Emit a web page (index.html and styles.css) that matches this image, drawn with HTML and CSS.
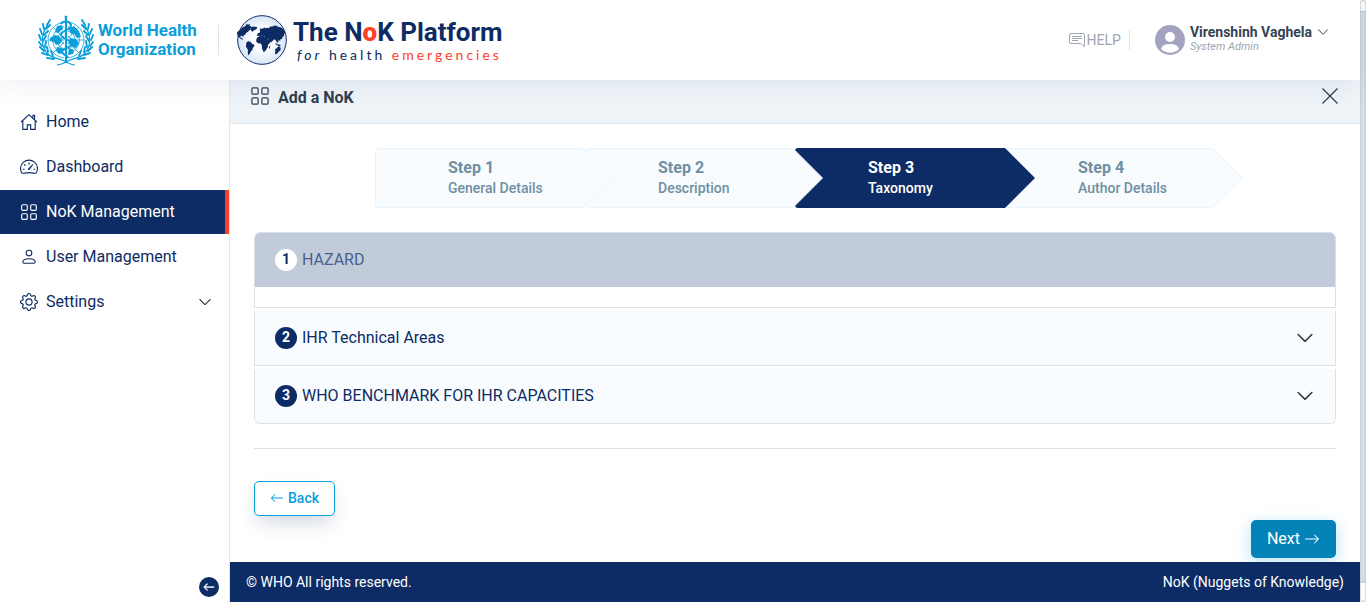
FILE: index.html
```html
<!DOCTYPE html>
<html lang="en">
<head>
<meta charset="utf-8">
<meta name="viewport" content="width=device-width, initial-scale=1">
<title>The NoK Platform - Add a NoK</title>
<link rel="stylesheet" href="styles.css">
</head>
<body>
<svg class="sprite" aria-hidden="true">
  <symbol id="chevron" viewBox="0 0 16 16"><path d="M1.646 4.646a.5.5 0 0 1 .708 0L8 10.293l5.646-5.647a.5.5 0 0 1 .708.708l-6 6a.5.5 0 0 1-.708 0l-6-6a.5.5 0 0 1 0-.708z"/></symbol>
  <symbol id="arrow-left" viewBox="0 0 16 16"><path d="M15 8a.5.5 0 0 0-.5-.5H2.707l3.147-3.146a.5.5 0 1 0-.708-.708l-4 4a.5.5 0 0 0 0 .708l4 4a.5.5 0 0 0 .708-.708L2.707 8.5H14.5A.5.5 0 0 0 15 8z"/></symbol>
  <symbol id="grid" viewBox="0 0 16 16"><g fill="none" stroke="currentColor"><rect x="1.5" y="1.5" width="5" height="5" rx="1"/><rect x="9.5" y="1.5" width="5" height="5" rx="1"/><rect x="1.5" y="9.5" width="5" height="5" rx="1"/><rect x="9.5" y="9.5" width="5" height="5" rx="1"/></g></symbol>
</svg>
<div class="frame">
  <div class="app">
    <header class="topbar">
      <div class="brand">
        <a class="who" href="#">
          <svg class="who-emblem" viewBox="0 0 56 52" fill="none" stroke="currentColor" aria-hidden="true">
            <g stroke-width=".8"><circle cx="28" cy="26" r="18"/><circle cx="28" cy="26" r="13.500"/><circle cx="28" cy="26" r="9"/><circle cx="28" cy="26" r="4.500"/><path d="M10 26h36M15.300 13.300l25.400 25.400M40.700 13.300L15.300 38.700"/></g>
            <path fill="currentColor" stroke="none" d="M12 24l5-3 4 1 3 4-2 4-4 1-2-3-4-1zM19 12l5-1 1 4-5 4-3-1zM31 15l5-3 5 5 2 6-4 1-3-4-4-1zM32 24l6 1 3 4-3 5-4-1-3-4zM31 34l5 2-1 4-5 1zM19 33l5 1 1 5-4 1-3-3z"/>
            <path stroke="#fff" stroke-width="4" d="M28 6v40"/>
            <path stroke-width="2.200" d="M28 2v47"/><circle cx="28" cy="3" r="1" fill="currentColor"/>
            <path stroke-width="2" d="M23 10c2-4 9-3 10 1 1 5-10 5-10 10 0 4 10 4 10 9 0 4-9 4-9 8 0 3 6 3 6 6"/>
            <g stroke-width="1.200"><path d="M10 11C3 19 2 32 10 40c5 5 12 4 18 8 4 2 6 3 9 3M46 11c7 8 8 21 0 29-5 5-12 4-18 8-4 2-6 3-9 3"/></g>
            <g stroke-width="1.900" stroke-linecap="round"><path d="M9 11l3-5M6 15l-1-5M4 20l-2-5M3 26l-2-5M4 32l-3-4M6 37l-4-4M10 41l-6-2M16 45l-7-1M8 15l4-4M6 21l4-4M5 27l3-5M7 33l1-6M10 38l-1-5M15 42l-2-5M47 11l-3-5M50 15l1-5M52 20l2-5M53 26l2-5M52 32l3-4M50 37l4-4M46 41l6-2M40 45l7-1M48 15l-4-4M50 21l-4-4M51 27l-3-5M49 33l-1-6M46 38l1-5M41 42l2-5"/></g>
          </svg>
          <span class="who-name">World Health<br>Organization</span>
        </a>
        <a class="nok" href="#">
          <svg class="globe" viewBox="80 29 152 152" aria-hidden="true">
            <defs><radialGradient id="sea"><stop offset=".4" stop-color="#fff"/><stop offset="1" stop-color="#d7e6f7"/></radialGradient></defs>
            <circle cx="156" cy="105" r="74" fill="url(#sea)" stroke="#0d2b64" stroke-width="3"/>
            <path fill="#0d2b64" d="M88 76l8-9 9-4 4-6 7 1 4-2-2 6 6 3-4 5 2 4-5 1-3 5-6 3-3 6-5 1 1 4-3 1-3-3-5 1 1 5 5 2 2 4-5-1-9-8-4-10 1-5zM121 66l9-2 12 2-3 6-7 3-5 5-5-5 1-4-4-2zM109 111l6-2 8 3 3 5 6 2 1 4-5 6-1 6-5 5-3 6-4 5-2-2 0-14-6-10zM142 97l6-3 9-1 7 3 6-1 4 8 4 4 4 1-2 6-6 6 0 6-5 8-4 6-5 1-4-10-1-11-4-5-7 1-6-7 1-7zM178 124l3-3-1 9-3 2zM144 84l5-1 2-6-3-2 3-5 6 1 7-4 3 2 5-1 4 1 5-5 8 0 3-3 8 1 5 3 9 2 9 7 4 9-4 4 0 6-4 2-2 6-5 2-1 6-4-5-2 9-4-1-4-7-4-2-5 5-4 4-4 0-4-7-3-6-7-1-1-4-6 0-3-3-6 4-4-3-6 1zM195 133l6-3 4-5 5 0 3 4-1 7-5 5-7 7-5-1 2-9zM197 113l7 6 7 0 2 4-7 0-8-4z"/>
          </svg>
          <span class="nok-text">
            <strong class="nok-name">The N<b>o</b>K Platform</strong>
            <span class="nok-tag"><i>for</i> health <b>emergencies</b></span>
          </span>
        </a>
      </div>
      <div class="account">
        <a class="help" href="#">
          <svg class="help-icon" viewBox="0 0 16 16" fill="none" stroke="currentColor" aria-hidden="true"><path d="M15.500 14.500V3A1.500 1.500 0 0 0 14 1.500H2A1.500 1.500 0 0 0 .5 3v7A1.500 1.500 0 0 0 2 11.500h9.500zM3 4.500h10M3 6.500h10M3 8.500h6"/></svg>HELP</a>
        <button class="user" type="button">
          <svg class="avatar" viewBox="0 0 30 30" aria-hidden="true"><circle cx="15" cy="15" r="15" fill="#a4a3bf"/><circle cx="15" cy="12" r="5" fill="#fff"/><path fill="#fff" d="M6 24c1-4 5-5 9-5s8 1 9 5c-5 5-13 5-18 0z"/></svg>
          <span class="user-text"><span class="user-name">Virenshinh Vaghela<svg class="icon-sm" aria-hidden="true"><use href="#chevron"/></svg></span><em class="user-role">System Admin</em></span>
        </button>
      </div>
    </header>
    <div class="body">
      <aside class="sidebar">
        <nav class="menu">
          <a class="menu-item" href="#"><svg class="menu-icon" viewBox="0 0 16 16" fill="none" stroke="currentColor" aria-hidden="true"><path d="M1 8l7-6.500L15 8M2.500 7v7.500h4v-4h3v4h4V7M11.500 4V2h1.500v3.500"/></svg>Home</a>
          <a class="menu-item" href="#"><svg class="menu-icon" viewBox="0 0 16 16" fill="none" stroke="currentColor" aria-hidden="true"><path d="M1.600 13.300a7.500 7.500 0 1 1 12.800 0c-.7 1-3-.3-6.400-.3s-5.700 1.300-6.400.3zM8 4v2M3.700 5.700l1.200 1.200M2.500 10h1.600M12 10h1.500"/><path d="M7.300 9.300L11.500 5l.5.500-3.300 4.800c-.8.900-2.200 0-1.400-1z" fill="currentColor" stroke="none"/></svg>Dashboard</a>
          <a class="menu-item active" href="#" aria-current="page"><svg class="menu-icon" aria-hidden="true"><use href="#grid"/></svg>NoK Management</a>
          <a class="menu-item" href="#"><svg class="menu-icon" viewBox="0 0 16 16" fill="none" stroke="currentColor" aria-hidden="true"><circle cx="8" cy="4.500" r="2.500"/><path d="M2.500 12.500c0-2 2-3 5.500-3s5.500 1 5.500 3c0 1-1 1-1 1h-9s-1 0-1-1z"/></svg>User Management</a>
          <a class="menu-item" href="#"><svg class="menu-icon" viewBox="0 0 16 16" fill="currentColor" aria-hidden="true"><path d="M8 4.754a3.246 3.246 0 1 0 0 6.492 3.246 3.246 0 0 0 0-6.492zM5.754 8a2.246 2.246 0 1 1 4.492 0 2.246 2.246 0 0 1-4.492 0z"/><path d="M9.796 1.343c-.527-1.790-3.065-1.790-3.592 0l-.094.319a.873.873 0 0 1-1.255.520l-.292-.160c-1.640-.892-3.433.902-2.540 2.541l.159.292a.873.873 0 0 1-.520 1.255l-.319.094c-1.790.527-1.790 3.065 0 3.592l.319.094a.873.873 0 0 1 .520 1.255l-.160.292c-.892 1.640.901 3.434 2.541 2.540l.292-.159a.873.873 0 0 1 1.255.520l.094.319c.527 1.790 3.065 1.790 3.592 0l.094-.319a.873.873 0 0 1 1.255-.520l.292.160c1.640.893 3.434-.902 2.540-2.541l-.159-.292a.873.873 0 0 1 .520-1.255l.319-.094c1.790-.527 1.790-3.065 0-3.592l-.319-.094a.873.873 0 0 1-.520-1.255l.160-.292c.893-1.640-.902-3.433-2.541-2.540l-.292.159a.873.873 0 0 1-1.255-.520l-.094-.319zm-2.633.283c.246-.835 1.428-.835 1.674 0l.094.319a1.873 1.873 0 0 0 2.693 1.115l.291-.160c.764-.415 1.600.420 1.184 1.185l-.159.292a1.873 1.873 0 0 0 1.116 2.692l.318.094c.835.246.835 1.428 0 1.674l-.319.094a1.873 1.873 0 0 0-1.115 2.693l.160.291c.415.764-.420 1.600-1.185 1.184l-.291-.159a1.873 1.873 0 0 0-2.693 1.116l-.094.318c-.246.835-1.428.835-1.674 0l-.094-.319a1.873 1.873 0 0 0-2.692-1.115l-.292.160c-.764.415-1.600-.420-1.184-1.185l.159-.291A1.873 1.873 0 0 0 1.945 8.930l-.319-.094c-.835-.246-.835-1.428 0-1.674l.319-.094A1.873 1.873 0 0 0 3.060 4.377l-.160-.292c-.415-.764.420-1.600 1.185-1.184l.292.159a1.873 1.873 0 0 0 2.692-1.115l.094-.319z"/></svg>Settings<svg class="icon-md push" aria-hidden="true"><use href="#chevron"/></svg></a>
        </nav>
        <button class="collapse" type="button" aria-label="Collapse menu"><svg aria-hidden="true"><use href="#arrow-left"/></svg></button>
      </aside>
      <div class="main">
        <div class="title-bar">
          <svg class="title-icon" aria-hidden="true"><use href="#grid"/></svg>
          <h1>Add a NoK</h1>
          <button class="close" type="button" aria-label="Close"><svg viewBox="0 0 16 16" fill="none" stroke="currentColor" aria-hidden="true"><path d="M.5.5l15 15M15.500.5l-15 15"/></svg></button>
        </div>
        <main class="content">
          <ol class="steps">
            <li class="step"><svg class="step-shape" aria-hidden="true"><path d="M3 .5H208L237.500 30 208 59.500H3Q.5 59.500.5 57V3Q.5.500 3 .5z"/></svg><strong>Step 1</strong><span>General Details</span></li>
            <li class="step"><svg class="step-shape" aria-hidden="true"><path d="M3 .5H208L237.500 30 208 59.500H3Q.5 59.500.5 57V3Q.5.500 3 .5z"/></svg><strong>Step 2</strong><span>Description</span></li>
            <li class="step active" aria-current="step"><svg class="step-shape" aria-hidden="true"><path d="M3 0H210L240 30 210 60H3Q0 60 0 57V3Q0 0 3 0z"/></svg><strong>Step 3</strong><span>Taxonomy</span></li>
            <li class="step"><svg class="step-shape" aria-hidden="true"><path d="M3 .5H208L237.500 30 208 59.500H3Q.5 59.500.5 57V3Q.5.500 3 .5z"/></svg><strong>Step 4</strong><span>Author Details</span></li>
          </ol>
          <div class="accordion">
            <section class="panel open"><button class="panel-head" type="button" aria-expanded="true"><span class="num">1</span>HAZARD</button><div class="panel-body"></div></section>
            <section class="panel"><button class="panel-head" type="button" aria-expanded="false"><span class="num">2</span>IHR Technical Areas<svg class="icon-lg push" aria-hidden="true"><use href="#chevron"/></svg></button></section>
            <section class="panel"><button class="panel-head" type="button" aria-expanded="false"><span class="num">3</span>WHO BENCHMARK FOR IHR CAPACITIES<svg class="icon-lg push" aria-hidden="true"><use href="#chevron"/></svg></button></section>
          </div>
          <div class="actions">
            <button class="back" type="button"><svg aria-hidden="true"><use href="#arrow-left"/></svg>Back</button>
            <button class="next" type="button">Next<svg aria-hidden="true"><use href="#arrow-left"/></svg></button>
          </div>
        </main>
        <footer class="footer"><span>© WHO All rights reserved.</span><span>NoK (Nuggets of Knowledge)</span></footer>
      </div>
    </div>
  </div>
  <div class="scroll-track"><div class="scroll-thumb"></div></div>
</div>
</body>
</html>
```

FILE: styles.css
```css
* { box-sizing: border-box; }

body {
  margin: 0;
  font: 16px/24px Roboto, "Liberation Sans", sans-serif;
  color: #0d2b64;
  background: #fff;
}

a { color: inherit; text-decoration: none; }

button {
  font: inherit;
  color: inherit;
  background: none;
  border: 0;
  padding: 0;
  cursor: pointer;
}

svg { flex: none; fill: currentColor; }
svg[fill="none"] { fill: none; }
.sprite { position: absolute; width: 0; height: 0; }

.icon-sm { width: 12px; height: 12px; }
.icon-md { width: 14px; height: 14px; color: #111; }
.icon-lg { width: 18px; height: 18px; color: #212529; stroke: currentColor; stroke-width: .4; }
.push { margin-left: auto; }

.frame { display: flex; min-height: 100vh; }
.app { flex: 1; display: flex; flex-direction: column; min-width: 0; }

/* Scroll bar */
.scroll-track {
  width: 6px;
  padding: 11px 0 19px;
  display: flex;
  background: #fff;
  border-radius: 3px;
  box-shadow: inset 0 0 2px #888;
}
.scroll-thumb { flex: 1; background: #d3dee6; box-shadow: inset 0 0 2px #9fb3c1; }

/* Header */
.topbar {
  position: relative;
  z-index: 2;
  display: flex;
  align-items: center;
  justify-content: space-between;
  height: 80px;
  padding: 0 31px 0 38px;
  background: #fff;
  box-shadow: 0 0 32px rgba(13, 43, 100, .1);
}
.brand, .who, .nok, .account, .user { display: flex; align-items: center; }
.who { gap: 4px; padding-right: 20px; color: #0a9edb; }
.who-emblem { width: 56px; height: 52px; }
.who-name { width: 100px; font-size: 17px; line-height: 19px; font-weight: 700; white-space: nowrap; }
.nok { gap: 6px; position: relative; padding-left: 19px; }
.nok::before { content: ""; position: absolute; left: 0; top: 10px; bottom: 10px; width: 1px; background: #dee2e6; }
.globe { width: 50px; height: 50px; }
.nok-text { display: flex; flex-direction: column; }
.nok-name { font-size: 26px; line-height: 30px; font-weight: 700; white-space: nowrap; }
.nok-name b, .nok-tag b { color: #ff4027; }
.nok-tag { padding-left: 4px; font: 14px/16px Lato, sans-serif; letter-spacing: 3px; white-space: nowrap; }
.nok-tag b { font-weight: 400; }

.help {
  display: flex;
  align-items: center;
  gap: 2px;
  padding-right: 8px;
  border-right: 1px solid #dee2e6;
  font-size: 14px;
  line-height: 20px;
  color: #9ea5b1;
}
.help-icon { width: 16px; height: 16px; }
.user { gap: 5px; margin-left: 25px; color: #334454; text-align: left; }
.avatar { width: 30px; height: 30px; }
.user-text { display: flex; flex-direction: column; padding-bottom: 3px; }
.user-name { display: flex; align-items: center; gap: 5px; font-size: 14px; line-height: 16px; font-weight: 700; }
.user-role { font-size: 11px; line-height: 13px; color: #9ea5b1; }

/* Sidebar */
.body { flex: 1; display: flex; }
.sidebar {
  width: 230px;
  display: flex;
  flex-direction: column;
  justify-content: space-between;
  padding: 20px 0 5px;
  border-right: 1px solid #e3e6ea;
}
.menu { display: grid; gap: 1px; }
.menu-item {
  display: flex;
  align-items: center;
  gap: 8px;
  height: 44px;
  padding: 0 17px 0 20px;
}
.menu-icon { width: 18px; height: 18px; }
.menu-item.active { color: #fff; background: #0d2b64; border-right: 4px solid #ff4027; }
.collapse {
  align-self: flex-end;
  display: grid;
  place-items: center;
  width: 20px;
  height: 20px;
  margin-right: 10px;
  border-radius: 50%;
  color: #fff;
  background: #0d2b64;
}
.collapse svg { width: 12px; height: 12px; stroke: currentColor; stroke-width: .8; }

/* Page */
.main { flex: 1; min-width: 0; display: flex; flex-direction: column; }
.title-bar {
  display: flex;
  align-items: center;
  gap: 8px;
  height: 44px;
  padding: 0 22px 8px 20px;
  color: #2f4152;
  background: #eff4f8;
  border-bottom: 1px solid #dee5ec;
}
.title-icon { width: 20px; height: 20px; margin-bottom: 3px; }
h1 { margin: 0; font-size: 16px; line-height: 24px; font-weight: 700; }
.close { display: flex; margin-left: auto; padding-bottom: 3px; }
.close svg { width: 16px; height: 16px; stroke-width: 1.3; }

.content { flex: 1; padding: 24px 24px 4px; }
.steps {
  display: flex;
  justify-content: center;
  margin: 0 0 24px;
  padding: 0;
  list-style: none;
}
.step {
  position: relative;
  width: 210px;
  height: 60px;
  padding: 9px 0 0 73px;
  display: flex;
  flex-direction: column;
  color: #6f8fa3;
}
.step:nth-child(1) { z-index: 4; }
.step:nth-child(2) { z-index: 3; }
.step:nth-child(3) { z-index: 2; }
.step:nth-child(4) { z-index: 1; }
.step-shape {
  position: absolute;
  z-index: -1;
  left: 0;
  top: 0;
  width: 240px;
  height: 60px;
  fill: #f8fcff;
  stroke: #e8f5ff;
}
.step strong { font-weight: 700; line-height: 21px; }
.step span { font-size: 14px; line-height: 20px; font-weight: 500; }
.step.active { color: #fff; }
.step.active .step-shape { fill: #0d2b64; stroke: none; }

.accordion { display: grid; gap: 3px; padding-bottom: 24px; border-bottom: 1px solid #dee2e6; }
.panel { border: 1px solid #dbe0e6; border-top: 0; overflow: hidden; }
.panel:first-child { border-top: 1px solid #dbe0e6; border-radius: 6px 6px 0 0; }
.panel:last-child { border-radius: 0 0 6px 6px; }
.panel-head {
  display: flex;
  align-items: center;
  gap: 5px;
  width: 100%;
  height: 54px;
  padding: 0 21px 0 20px;
  background: #f8fcff;
  text-align: left;
}
.open .panel-head { color: #49618f; background: #c2cbda; }
.panel-body { height: 20px; }
.num {
  width: 22px;
  height: 22px;
  border-radius: 50%;
  background: #0d2b64;
  color: #fff;
  font-size: 14px;
  line-height: 20px;
  font-weight: 700;
  text-align: center;
}
.open .num { background: #fff; color: #0d2b64; }

.actions { display: flex; flex-direction: column; gap: 4px; padding-top: 32px; }
.back, .next { display: flex; align-items: center; border-radius: 5px; }
.back {
  align-self: flex-start;
  gap: 4px;
  height: 35px;
  padding: 0 15px 2px;
  border: 1px solid #0a9edb;
  background: #fff;
  color: #0a9edb;
  font-size: 14px;
  font-weight: 500;
  box-shadow: 0 10px 20px -4px rgba(13, 43, 100, .2);
}
.back svg { width: 14px; height: 14px; }
.next {
  align-self: flex-end;
  gap: 4px;
  height: 38px;
  padding: 0 16px;
  background: #0483b8;
  color: #fff;
  box-shadow: 0 4px 16px rgba(10, 158, 219, .3);
}
.next svg { width: 16px; height: 16px; transform: scaleX(-1); }

.footer {
  position: relative;
  display: flex;
  justify-content: space-between;
  align-items: center;
  height: 40px;
  padding: 0 16px;
  background: #0d2b64;
  color: #fff;
  font-size: 14px;
}
```
